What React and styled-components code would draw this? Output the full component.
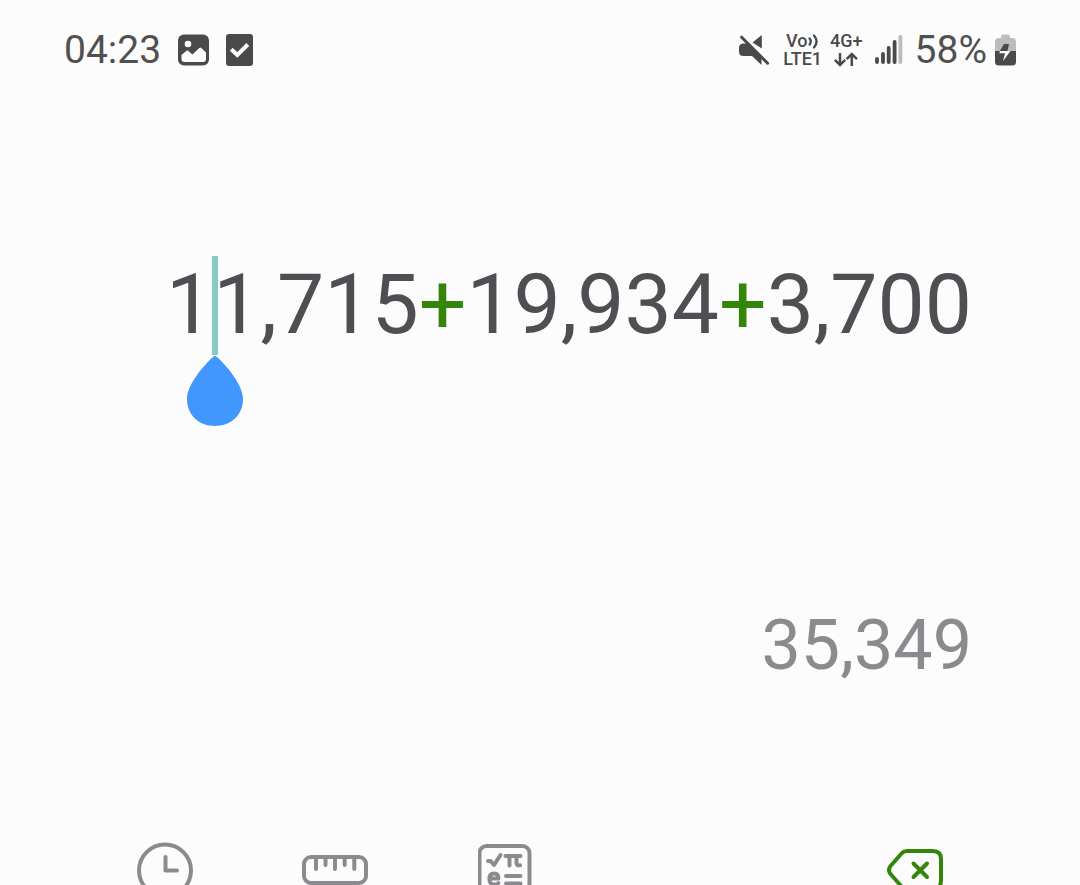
import React from "react";
import styled, { createGlobalStyle } from "styled-components";

const GlobalStyle = createGlobalStyle`
  *, *::before, *::after { box-sizing: border-box; }
  html { overflow: hidden; }
  body {
    margin: 0;
    background: #fcfcfc;
    color: #4a4a4a;
    font-family: Roboto, "Liberation Sans", sans-serif;
  }
  svg { display: block; flex: none; }
`;

const Screen = styled.div`
  display: flex;
  flex-direction: column;
  min-height: 100vh;
`;

const StatusBar = styled.header`
  display: flex;
  justify-content: space-between;
  align-items: center;
  height: 100px;
  padding: 0 64px;
`;

const StatusGroup = styled.div`
  display: flex;
  align-items: center;
  gap: ${({ $gap }) => $gap}px;
`;

const StatusText = styled.span`
  color: #505050;
  font-size: 39px;
  line-height: 46px;
`;

const Network = styled.div`
  display: flex;
  flex-direction: column;
  align-items: center;
  font-size: 18px;
  font-weight: 500;
  line-height: 18px;
`;

const NetworkLine = styled.span`
  display: flex;
  align-items: center;
  height: 18px;
`;

const Display = styled.main`
  display: flex;
  flex-direction: column;
  align-items: flex-end;
  gap: 250px;
  padding: 156px 108px 0 64px;
`;

const Expression = styled.div`
  color: #4e4e53;
  font-size: 84px;
  line-height: 98px;
  white-space: nowrap;
  outline: none;
`;

const Operator = styled.span`
  color: #34860b;
`;

const Caret = styled.span`
  position: relative;
  display: inline-block;
  width: 0;
  height: 98px;
  vertical-align: top;

  &::before {
    content: "";
    position: absolute;
    top: 0;
    left: -1px;
    width: 6px;
    height: 99px;
    background: #83cbc3;
  }
`;

const Handle = styled.svg`
  position: absolute;
  top: 100px;
  left: -26px;
`;

const Result = styled.output`
  color: #8b8b8f;
  font-size: 70px;
  line-height: 82px;
`;

const Toolbar = styled.nav`
  display: flex;
  justify-content: space-between;
  margin-top: 136px;
  padding: 0 80px;
`;

const Tools = styled.div`
  display: flex;
`;

const ToolButton = styled.button`
  display: flex;
  justify-content: center;
  align-items: center;
  width: 170px;
  height: 96px;
  padding: 0;
  border: 0;
  background: none;
  color: ${({ $accent }) => ($accent ? "#34860b" : "#8b8b8f")};
  cursor: pointer;
`;

const PictureIcon = () => (
  <svg width="31" height="32" viewBox="0 0 31 32" aria-label="Screenshot saved">
    <rect width="31" height="31" y="0.5" rx="6" fill="#4a4a4a" />
    <circle cx="10" cy="10" r="3.3" fill="#fcfcfc" />
    <path d="M3.5 21 L8.6 16.8 Q9.5 16.2 10.4 17 L14.4 20.6 L21.3 14 Q22.3 13.2 23.3 14 L28 18.6 V25 Q28 28 25 28 H6.5 Q3.5 28 3.5 25 Z" fill="#fcfcfc" />
  </svg>
);

const TaskIcon = () => (
  <svg width="27" height="32" viewBox="0 0 27 32" aria-label="Task">
    <rect width="27" height="32" rx="3" fill="#4a4a4a" />
    <path d="M5.2 15.2 L11.3 21 L21.8 10.5" fill="none" stroke="#fcfcfc" strokeWidth="4" />
  </svg>
);

const MuteIcon = () => (
  <svg width="32" height="32" viewBox="0 0 32 32" aria-label="Muted">
    <path d="M4 9.5 H8 L22.5 23.5 V31 L13 22 H4.5 Q0 22 0 17.5 V13.5 Q0 10 4 9.5 Z" fill="#4a4a4a" />
    <path d="M22.8 1 V14.5 L13.5 8.5 Z" fill="#4a4a4a" />
    <path d="M2.6 3.2 L28.6 29.2" stroke="#4a4a4a" strokeWidth="3" strokeLinecap="round" />
  </svg>
);

const WavesIcon = () => (
  <svg width="12" height="15" viewBox="0 0 12 15" aria-hidden="true">
    <path d="M2.6 4.5 Q5 7.5 2.6 10.5 M7 1.5 Q12.2 7.5 7 13.5" fill="none" stroke="#4a4a4a" strokeWidth="2.3" strokeLinecap="round" />
  </svg>
);

const TransferIcon = () => (
  <svg width="26" height="15" viewBox="0 0 26 15" aria-hidden="true">
    <path d="M7 1 V13 M1.8 7.8 L7 13 L12.2 7.8 M18.8 14 V2 M13.6 7.2 L18.8 2 L24 7.2" fill="none" stroke="#4a4a4a" strokeWidth="2.5" />
  </svg>
);

const SignalIcon = () => (
  <svg width="28" height="32" viewBox="0 0 28 32" aria-label="Signal">
    <g stroke="#4a4a4a" strokeWidth="3.8" strokeLinecap="round">
      <path d="M2 25 V28 M8 20 V28 M13.7 14 V28 M19.6 8 V28" />
      <path d="M25.4 3 V28" stroke="#bcbcbc" />
    </g>
  </svg>
);

const BatteryIcon = () => (
  <svg width="21" height="32" viewBox="0 0 21 32" aria-label="Charging">
    <path d="M6 3 Q6 0.5 8 0.5 H13 Q15 0.5 15 3 V4 H17 Q21 4 21 8 V17 H0 V8 Q0 4 4 4 H6 Z" fill="#bcbcbc" />
    <path d="M0 17 H21 V28 Q21 31.5 17 31.5 H4 Q0 31.5 0 28 Z" fill="#4a4a4a" />
    <path d="M9 10 H14 L12.5 17 H4.8 Z" fill="#4a4a4a" />
    <path d="M4.8 17 L4.5 19.2 H10 L8 27 L15.5 17 Z" fill="#fcfcfc" />
  </svg>
);

const ClockIcon = () => (
  <svg width="56" height="56" viewBox="0 0 56 56" fill="none" stroke="currentColor" strokeWidth="4">
    <circle cx="28" cy="28.5" r="26" />
    <path d="M28.5 15 V28.5 H40" strokeLinecap="round" strokeLinejoin="round" />
  </svg>
);

const RulerIcon = () => (
  <svg width="66" height="30" viewBox="0 0 66 30" fill="none" stroke="currentColor" strokeWidth="4">
    <rect x="2" y="2" width="62" height="26" rx="7" />
    <path d="M14 3 V14 M23.5 3 V10 M33 3 V14 M42.7 3 V10 M52.3 3 V14" strokeLinecap="round" />
  </svg>
);

const ScientificIcon = () => (
  <svg width="54" height="52" viewBox="0 0 54 52" fill="none" stroke="currentColor" strokeWidth="4" strokeLinecap="round" strokeLinejoin="round">
    <rect x="1.5" y="2" width="50" height="48" rx="7" />
    <path d="M10 17 H12.5 L16 21 L22.5 11" strokeWidth="4" />
    <path d="M27.5 12 H42.5 M31.5 12 V21.5 M38.5 12 V19 Q38.5 21.8 42 21.3" strokeWidth="4" />
    <path d="M12 34.5 H20.5 Q20.5 29.5 16.2 29.5 Q11.3 29.5 11.3 35 Q11.3 40.5 16.2 40.5 Q19 40.5 20.5 39" strokeWidth="3.8" />
    <path d="M28 32 H42.5 M28 39.5 H42.5" strokeWidth="4" />
  </svg>
);

const BackspaceIcon = () => (
  <svg width="56" height="42" viewBox="0 0 56 42" fill="none" stroke="currentColor" strokeWidth="4" strokeLinecap="round" strokeLinejoin="round">
    <path d="M20 2 H46 Q54 2 54 10 V32 Q54 40 46 40 H20 Q17 40 15 38 L3.5 25 Q0.5 21 3.5 17 L15 4 Q17 2 20 2 Z" />
    <path d="M26.5 14.5 L40 28 M40 14.5 L26.5 28" />
  </svg>
);

export default function App() {
  return (
    <Screen>
      <GlobalStyle />
      <StatusBar>
        <StatusGroup $gap={17}>
          <StatusText>04:23</StatusText>
          <PictureIcon />
          <TaskIcon />
        </StatusGroup>
        <StatusGroup $gap={8}>
          <StatusGroup $gap={12}>
            <MuteIcon />
            <StatusGroup $gap={8}>
              <Network>
                <NetworkLine>Vo<WavesIcon /></NetworkLine>
                <NetworkLine>LTE1</NetworkLine>
              </Network>
              <Network>
                <NetworkLine>4G+</NetworkLine>
                <NetworkLine><TransferIcon /></NetworkLine>
              </Network>
            </StatusGroup>
            <SignalIcon />
            <StatusText>58%</StatusText>
          </StatusGroup>
          <BatteryIcon />
        </StatusGroup>
      </StatusBar>

      <Display>
        <Expression role="textbox" aria-label="Expression" tabIndex={0}>
          1
          <Caret>
            <Handle width="56" height="70" viewBox="0 0 56 70" aria-hidden="true">
              <path d="M26 1 Q28 -0.8 30 1 C40 10 56 29 56 43 C56 59 44 70 28 70 C12 70 0 59 0 43 C0 29 16 10 26 1 Z" fill="#4297ff" />
            </Handle>
          </Caret>
          1,715<Operator>+</Operator>19,934<Operator>+</Operator>3,700
        </Expression>
        <Result aria-label="Result">35,349</Result>
      </Display>

      <Toolbar aria-label="Calculator tools">
        <Tools>
          <ToolButton type="button" aria-label="History"><ClockIcon /></ToolButton>
          <ToolButton type="button" aria-label="Unit converter"><RulerIcon /></ToolButton>
          <ToolButton type="button" aria-label="Scientific mode"><ScientificIcon /></ToolButton>
        </Tools>
        <ToolButton type="button" aria-label="Backspace" $accent><BackspaceIcon /></ToolButton>
      </Toolbar>
    </Screen>
  );
}
